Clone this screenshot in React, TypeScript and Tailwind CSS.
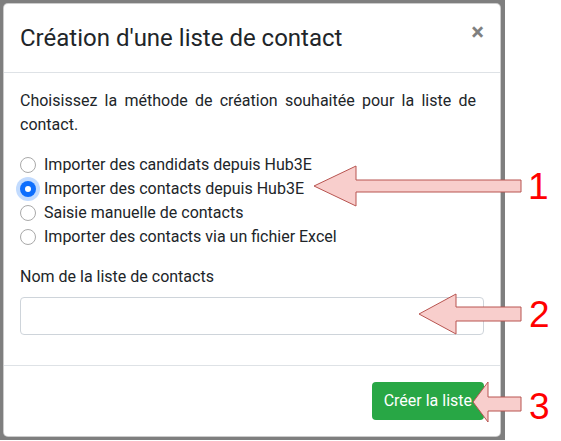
import { useState } from 'react';

const options = [
  'Importer des candidats depuis Hub3E',
  'Importer des contacts depuis Hub3E',
  'Saisie manuelle de contacts',
  'Importer des contacts via un fichier Excel',
];

function Radio({ checked }: { checked: boolean }) {
  if (checked) {
    return (
      <span className="flex h-4 w-4 shrink-0 items-center justify-center rounded-full bg-[#0d6efd] shadow-[0_0_0_4px_rgba(13,110,253,0.25)]">
        <span className="h-[6px] w-[6px] rounded-full bg-white" />
      </span>
    );
  }
  return <span className="h-4 w-4 shrink-0 rounded-full border border-[#a9a9a9] bg-white" />;
}

export default function App() {
  const [method, setMethod] = useState(1);
  const [name, setName] = useState('');

  return (
    <div className="relative h-[441px] w-[561px] bg-white font-['Roboto','Liberation_Sans',sans-serif] text-[#212529]">
      {/* cadre gris autour de la modale */}
      <div className="h-[440px] w-[505px] bg-[#7f7f7f] pl-[3px] pt-[3px]">
        <div className="flex h-[434px] w-[498px] flex-col rounded-[5px] border border-black/20 bg-white">
          <div className="flex items-start border-b border-[#dee2e6] p-4">
            <h4 className="text-[24px] leading-9">Création d'une liste de contact</h4>
            <button className="-m-4 ml-auto p-4 text-[24px] font-bold leading-6 text-black/50">×</button>
          </div>

          <div className="flex-1 p-4 text-[16px] leading-6">
            <p className="mb-4 pr-2 text-justify">
              Choisissez la méthode de création souhaitée pour la liste de contact.
            </p>
            <div className="mb-4">
              {options.map((label, i) => (
                <label key={label} className="flex h-6 cursor-pointer items-center" onClick={() => setMethod(i)}>
                  <Radio checked={method === i} />
                  <span className="ml-2">{label}</span>
                </label>
              ))}
            </div>
            <label className="mb-2 block">Nom de la liste de contacts</label>
            <input
              value={name}
              onChange={(e) => setName(e.target.value)}
              className="block h-[38px] w-full rounded border border-[#ced4da] px-3 outline-none"
            />
          </div>

          <div className="flex justify-end border-t border-[#dee2e6] p-3">
            <button className="m-1 h-[38px] rounded bg-[#28a745] px-3 text-[16px] text-white">Créer la liste</button>
          </div>
        </div>
      </div>

      {/* flèches d'annotation */}
      <svg className="pointer-events-none absolute left-0 top-0" width="561" height="441">
        <g fill="#f8cecc" stroke="#b85450" strokeWidth="1">
          <polygon points="314,186 356,166 356,180 521,180 521,192 356,192 356,206" />
          <polygon points="419,314 456,294 456,307 521,307 521,321 456,321 456,334" />
          <polygon points="473,402 488,382 488,397 521,397 521,411 488,411 488,422" />
        </g>
        <g fill="#ff0000" fontFamily="'Liberation Sans', Arial, sans-serif" fontSize="37">
          <text x="528" y="199">1</text>
          <text x="529" y="327">2</text>
          <text x="529" y="419">3</text>
        </g>
      </svg>
    </div>
  );
}
